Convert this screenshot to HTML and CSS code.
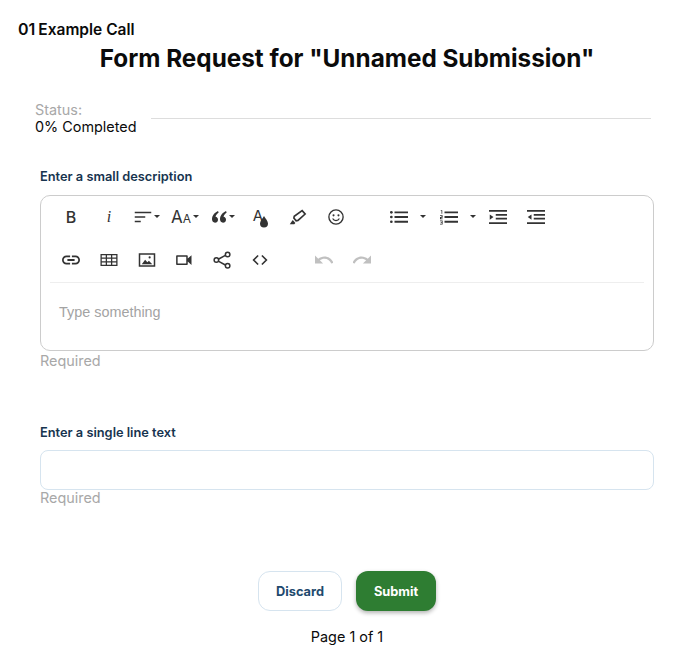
FILE: index.html
```html
<!DOCTYPE html>
<html lang="en">
<head>
    <meta charset="UTF-8">
    <meta name="viewport" content="width=device-width, initial-scale=1.0">
    <title>Form Request</title>
    <link rel="stylesheet" href="styles.css">
</head>
<body>
    <div class="call-title"><span class="call-num">01</span><span>Example Call</span></div>
    <h1>Form Request for "Unnamed Submission"</h1>

    <div class="status">
        <div class="status-text">
            <div class="status-label">Status:</div>
            <div>0% Completed</div>
        </div>
        <div class="status-line"></div>
    </div>

    <form class="form">
        <div class="field">
            <label class="field-label">Enter a small description</label>
            <div class="editor">
                <div class="toolbar">
                    <button type="button" class="tool tool-text">B</button>
                    <button type="button" class="tool tool-italic">i</button>
                    <button type="button" class="tool">
                        <svg class="icon" viewBox="0 0 24 24"><path d="M1 5h22v2H1zM1 11h14v2H1zM1 17h8v2H1z"/></svg>
                        <span class="caret"></span>
                    </button>
                    <button type="button" class="tool">
                        <span class="size-big">A</span><span class="size-small">A</span>
                        <span class="caret"></span>
                    </button>
                    <button type="button" class="tool">
                        <svg class="icon icon-quote" viewBox="0 0 24 24"><path d="M10.500 3C5.500 5.500 1.500 9.500 1.500 15.500c0 3 2 5 4.500 5s4.500-2 4.500-4.500c0-2.300-1.600-4.100-3.700-4.300.6-2.500 2.200-4.700 4.700-6.500zM22.500 3c-5 2.500-9 6.500-9 12.500 0 3 2 5 4.500 5s4.500-2 4.500-4.500c0-2.300-1.600-4.100-3.700-4.300.6-2.500 2.200-4.700 4.700-6.500z"/></svg>
                        <span class="caret"></span>
                    </button>
                    <button type="button" class="tool">
                        <span class="color-a">A</span>
                        <svg class="drop" viewBox="0 0 10 12"><path d="M5 0C3.500 2.500 1 5 1 7.500a4 4 0 0 0 8 0C9 5 6.500 2.500 5 0z"/></svg>
                    </button>
                    <button type="button" class="tool tool-marker">
                        <svg class="icon" viewBox="0 0 24 24"><path fill="none" stroke="#333" stroke-width="2.200" d="M17.500 3.500l4 4.500-9.500 8.500-2.500.5-3-3.500.5-2.500z"/><path d="M5 16l3.500 4-1.500 1.500H1z"/></svg>
                    </button>
                    <button type="button" class="tool tool-marker">
                        <svg class="icon" viewBox="0 0 24 24"><circle cx="12" cy="12" r="9.500" fill="none" stroke="#333" stroke-width="1.800"/><circle cx="8.700" cy="9.800" r="1.400"/><circle cx="15.300" cy="9.800" r="1.400"/><path d="M7.500 14a5 5 0 0 0 9 0" fill="none" stroke="#333" stroke-width="1.600"/></svg>
                    </button>
                    <div class="tool-gap"></div>
                    <button type="button" class="tool tool-list">
                        <svg class="icon" viewBox="0 0 24 24"><path d="M6 4.500h18v2.400H6zM6 10.800h18v2.400H6zM6 17.100h18v2.400H6z"/><circle cx="1.800" cy="5.700" r="1.800"/><circle cx="1.800" cy="12" r="1.800"/><circle cx="1.800" cy="18.300" r="1.800"/></svg>
                        <span class="caret caret-far"></span>
                    </button>
                    <button type="button" class="tool tool-list tool-list-last">
                        <svg class="icon" viewBox="0 0 24 24"><path d="M6 4.500h18v2.400H6zM6 10.800h18v2.400H6zM6 17.100h18v2.400H6z"/><path d="M1 3h2v4.500H2V4H1zM0 9.500h3.500V13H1.500v1H3.500v1H0v-3h2v-1.500H0zM0 16.500h3.500V22H0v-1h2.500v-1.200H1v-1h1.500v-1.300H0z"/></svg>
                        <span class="caret caret-far"></span>
                    </button>
                    <button type="button" class="tool">
                        <svg class="icon" viewBox="0 0 24 24"><path d="M0 2.500h24v2.400H0zM9 8h15v2.400H9zM9 13h15v2.400H9zM0 19h24v2.400H0zM1 8.500l5 3.500-5 3.500z"/></svg>
                    </button>
                    <button type="button" class="tool">
                        <svg class="icon" viewBox="0 0 24 24"><path d="M0 2.500h24v2.400H0zM9 8h15v2.400H9zM9 13h15v2.400H9zM0 19h24v2.400H0zM6 8.500L1 12l5 3.500z"/></svg>
                    </button>
                </div>
                <div class="toolbar toolbar-second">
                    <button type="button" class="tool">
                        <svg class="icon" viewBox="2 2 20 20"><path d="M3.900 12c0-1.710 1.390-3.100 3.100-3.100h4V7H7c-2.760 0-5 2.240-5 5s2.240 5 5 5h4v-1.900H7c-1.710 0-3.100-1.390-3.100-3.100zM8 13h8v-2H8v2zm9-6h-4v1.900h4c1.710 0 3.100 1.390 3.100 3.100s-1.390 3.100-3.100 3.100h-4V17h4c2.760 0 5-2.240 5-5s-2.240-5-5-5z"/></svg>
                    </button>
                    <button type="button" class="tool">
                        <svg class="icon" viewBox="0 0 24 24"><path fill="none" stroke="#333" stroke-width="1.700" d="M1.500 4.800h21v14.400h-21zM1.500 9.600h21M1.500 14.400h21M8.500 4.800v14.400M15.500 4.800v14.400"/></svg>
                    </button>
                    <button type="button" class="tool">
                        <svg class="icon" viewBox="0 0 24 24"><path fill="none" stroke="#333" stroke-width="2" d="M2 4h20v16H2z"/><path d="M5 17.500l4.500-6 3 3.500 2-2 4.500 4.500z"/><circle cx="15.500" cy="8.500" r="1.400"/></svg>
                    </button>
                    <button type="button" class="tool tool-shift">
                        <svg class="icon" viewBox="0 0 24 24"><path d="M15 7.500v9H3.500v-9H15M16 5.500H2.500c-.55 0-1 .45-1 1v11c0 .55.45 1 1 1H16c.55 0 1-.45 1-1v-3.500l5 4.500V5.500l-5 4.500V6.500c0-.55-.45-1-1-1z"/></svg>
                    </button>
                    <button type="button" class="tool tool-shift">
                        <svg class="icon" viewBox="0 0 24 24"><path fill="none" stroke="#333" stroke-width="2" d="M7 11l9.500-5.200M7 13.500l9.500 5.200"/><circle cx="4.500" cy="12" r="3" fill="#fff" stroke="#333" stroke-width="2"/><circle cx="19.500" cy="4.500" r="3" fill="#fff" stroke="#333" stroke-width="2"/><circle cx="19.500" cy="19.500" r="3" fill="#fff" stroke="#333" stroke-width="2"/></svg>
                    </button>
                    <button type="button" class="tool tool-shift">
                        <svg class="icon" viewBox="0 0 24 24"><path fill="none" stroke="#333" stroke-width="2.200" d="M9.500 6l-6 6 6 6M14.500 6l6 6-6 6"/></svg>
                    </button>
                    <div class="tool-gap-small"></div>
                    <button type="button" class="tool tool-off">
                        <svg class="icon" viewBox="2 2 20 20"><path d="M12.500 8c-2.650 0-5.050.99-6.900 2.600L2 7v9h9l-3.620-3.620c1.390-1.160 3.160-1.880 5.120-1.880 3.540 0 6.550 2.310 7.600 5.500l2.370-.78C21.080 11.030 17.150 8 12.500 8z"/></svg>
                    </button>
                    <button type="button" class="tool tool-off">
                        <svg class="icon" viewBox="2 2 20 20"><path d="M18.400 10.600C16.550 8.990 14.150 8 11.500 8c-4.650 0-8.580 3.030-9.960 7.220L3.900 16c1.050-3.190 4.050-5.500 7.600-5.500 1.950 0 3.730.72 5.120 1.880L13 16h9V7l-3.600 3.600z"/></svg>
                    </button>
                </div>
                <div class="editor-body">Type something</div>
            </div>
            <div class="hint">Required</div>
        </div>

        <div class="field field-second">
            <label class="field-label field-label-tight">Enter a single line text</label>
            <input class="text-input" type="text">
            <div class="hint hint-tight">Required</div>
        </div>

        <div class="actions">
            <button type="button" class="btn btn-discard">Discard</button>
            <button type="button" class="btn btn-submit">Submit</button>
        </div>
    </form>

    <div class="pager">Page 1 of 1</div>
</body>
</html>
```
FILE: styles.css
```css
:root {
    --label-color: #17344f;
    --muted-color: #a8a8a8;
    --border-color: #d6e4ef;
    --icon-color: #333;
}

body {
    font-family: Inter, 'Noto Sans', sans-serif;
    margin: 0;
    background-color: #fff;
    color: #0b0b0b;
}

.call-title {
    display: flex;
    gap: 3px;
    padding: 21px 0 0 18px;
    font-size: 15.5px;
    line-height: 17px;
    font-weight: 600;
}

.call-num {
    font-size: 16px;
    line-height: 17px;
}

h1 {
    margin: 0;
    padding-top: 4px;
    font-size: 24.3px;
    line-height: 32px;
    font-weight: 700;
    text-align: center;
    width: 694px;
}

.status {
    display: flex;
    align-items: center;
    gap: 15px;
    margin: 27px 37px 0 35px;
    font-size: 14.4px;
    line-height: 17px;
}

.status-label {
    color: var(--muted-color);
}

.status-line {
    flex: 1;
    height: 1px;
    background: #ddd;
}

.form {
    padding: 0 34px 0 40px;
}

.field {
    margin-top: 34px;
}

.field-second {
    margin-top: 55px;
}

.field-label {
    display: block;
    font-size: 12.8px;
    line-height: 15px;
    font-weight: 600;
    color: var(--label-color);
    margin-bottom: 11px;
}

.field-label-tight {
    margin-bottom: 10px;
}

.editor {
    border: 1px solid #ccc;
    border-radius: 10px;
    height: 154px;
    padding: 0 9px;
}

.toolbar {
    display: flex;
    align-items: center;
    height: 42px;
    padding: 0 0 0 2px;
}

.toolbar-second {
    height: 44px;
    border-bottom: 1px solid #eee;
}

.tool {
    display: flex;
    align-items: center;
    justify-content: center;
    width: 38px;
    height: 28px;
    padding: 0;
    border: 0;
    background: none;
    color: var(--icon-color);
    font-family: Inter, sans-serif;
}

.tool-text {
    font-size: 16px;
    font-weight: 500;
}

.tool-italic {
    font-size: 16px;
    font-style: italic;
    font-family: 'Liberation Serif', serif;
}

.tool-marker {
    padding-right: 2px;
}

.tool-shift {
    padding-right: 2px;
}

.tool-list {
    width: 50px;
    justify-content: flex-start;
    padding-left: 2px;
}

.tool-list-last {
    width: 41px;
}

.tool-off {
    opacity: 0.3;
}

.tool-gap {
    width: 32px;
}

.tool-gap-small {
    width: 25px;
}

.icon {
    width: 18px;
    height: 18px;
    fill: var(--icon-color);
    flex: none;
}

.icon-quote {
    width: 16px;
    height: 16px;
}

.caret {
    width: 0;
    height: 0;
    margin-left: 2px;
    border-left: 3px solid transparent;
    border-right: 3px solid transparent;
    border-top: 3px solid var(--icon-color);
    flex: none;
    margin-bottom: 2px;
}

.caret-far {
    margin-left: 12px;
}

.size-big {
    font-size: 17px;
}

.size-small {
    font-size: 12px;
    padding-top: 3px;
}

.color-a {
    font-size: 15px;
    font-weight: 400;
    margin-top: -4px;
}

.drop {
    width: 10px;
    height: 12px;
    fill: var(--icon-color);
    margin: 10px 0 0 -4px;
}

.editor-body {
    padding: 21px 0 0 9px;
    font-family: 'Liberation Sans', sans-serif;
    font-size: 14.4px;
    line-height: 17px;
    color: #a3a3a3;
}

.hint {
    margin-top: 1px;
    font-size: 14.4px;
    line-height: 18px;
    color: var(--muted-color);
}

.hint-tight {
    margin-top: -1px;
}

.text-input {
    display: block;
    width: 100%;
    height: 40px;
    box-sizing: border-box;
    border: 1px solid var(--border-color);
    border-radius: 8px;
    outline: none;
}

.actions {
    display: flex;
    justify-content: center;
    gap: 14px;
    margin-top: 64px;
}

.btn {
    height: 40px;
    border-radius: 12px;
    font-family: Inter, sans-serif;
    font-size: 12.8px;
    font-weight: 700;
}

.btn-discard {
    width: 84px;
    background: #fff;
    border: 1px solid var(--border-color);
    color: #1f4a6e;
}

.btn-submit {
    width: 80px;
    background: #2e7d32;
    border: 0;
    color: #fff;
    box-shadow: 0 2px 4px rgba(0,0,0,0.3);
}

.pager {
    margin-top: 17px;
    font-size: 14.4px;
    line-height: 18px;
    text-align: center;
    width: 694px;
}
```
